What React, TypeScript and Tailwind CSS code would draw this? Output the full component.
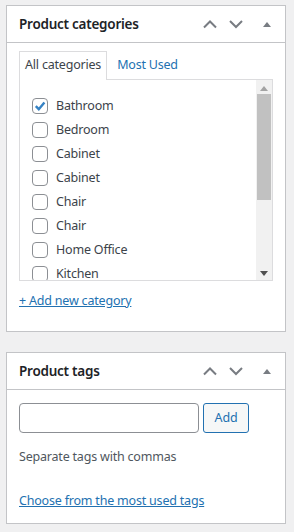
import React from "react";

const font = { fontFamily: '"Noto Sans", "Open Sans", sans-serif' };

function Chevron({ up }: { up?: boolean }) {
  return (
    <svg width="16" height="10" viewBox="0 0 16 10" aria-hidden="true">
      <path
        d={up ? "M2 8.5 L8 2.5 L14 8.5" : "M2 2 L8 8 L14 2"}
        fill="none"
        stroke="#787c82"
        strokeWidth="2"
      />
    </svg>
  );
}

function HeaderButtons() {
  return (
    <div className="flex items-center">
      <span className="flex w-[26px] justify-center">
        <Chevron up />
      </span>
      <span className="flex w-[26px] justify-center">
        <Chevron />
      </span>
      <span className="flex w-[36px] justify-center">
        <svg width="10" height="6" viewBox="0 0 10 6" aria-hidden="true">
          <path d="M1 6 L5 1 L9 6 Z" fill="#787c82" />
        </svg>
      </span>
    </div>
  );
}

function Postbox({ title, children }: { title: string; children: React.ReactNode }) {
  return (
    <div className="border border-[#c3c4c7] bg-white">
      <div className="flex h-[37px] items-center justify-between border-b border-[#c3c4c7] pl-3">
        <h2 className="text-[13.5px] font-semibold tracking-[-0.25px] text-[#1d2327]">{title}</h2>
        <HeaderButtons />
      </div>
      {children}
    </div>
  );
}

function Checkbox({ checked }: { checked?: boolean }) {
  return (
    <span className="flex h-4 w-4 shrink-0 items-center justify-center rounded-[4px] border border-[#8c8f94] bg-white">
      {checked ? (
        <svg width="14" height="14" viewBox="0 0 14 14" aria-hidden="true">
          <path d="M2.8 7.2 L5.8 10.2 L11.4 3.4" fill="none" stroke="#3582c4" strokeWidth="2.4" />
        </svg>
      ) : null}
    </span>
  );
}

const categories = [
  { name: "Bathroom", checked: true },
  { name: "Bedroom" },
  { name: "Cabinet" },
  { name: "Cabinet" },
  { name: "Chair" },
  { name: "Chair" },
  { name: "Home Office" },
  { name: "Kitchen" },
];

export default function App() {
  return (
    <div
      className="min-h-[532px] w-[294px] bg-[#f0f0f1] pl-[6px] pr-[8px] pt-[5px] text-[12.5px] tracking-[-0.2px] text-[#3c434a]"
      style={font}
    >
      <Postbox title="Product categories">
        <div className="px-3 pb-[12px] pt-[8px]">
          <div className="flex items-end">
            <span className="-mb-px flex h-[29px] items-center border border-b-0 border-[#dcdcde] bg-white px-[5px] pb-[1px] text-[#3c434a]">
              All categories
            </span>
            <span className="flex h-[28px] items-center px-[10px] text-[#2271b1]">Most Used</span>
          </div>
          <div className="flex h-[202px] border border-[#dcdcde] bg-white">
            <ul className="flex-1 overflow-hidden pl-3 pt-[14px]">
              {categories.map((c, i) => (
                <li key={i} className="flex h-6 items-center gap-2">
                  <Checkbox checked={c.checked} />
                  <span>{c.name}</span>
                </li>
              ))}
            </ul>
            <div className="flex w-[16px] flex-col items-center bg-[#f1f1f1] pb-[4px] pt-[6px]">
              <svg width="8" height="5" viewBox="0 0 8 5" aria-hidden="true">
                <path d="M0 5 L4 0 L8 5 Z" fill="#a3a3a3" />
              </svg>
              <div className="mt-[3px] h-[106px] w-[14px] bg-[#c1c1c1]" />
              <div className="flex-1" />
              <svg width="8" height="5" viewBox="0 0 8 5" aria-hidden="true">
                <path d="M0 0 L4 5 L8 0 Z" fill="#505050" />
              </svg>
            </div>
          </div>
          <div className="mt-[10px] h-[28px] leading-[20px]">
            <a className="text-[#2271b1] underline">+ Add new category</a>
          </div>
        </div>
      </Postbox>
      <div className="mt-[20px]">
        <Postbox title="Product tags">
          <div className="px-3 pb-[12px] pt-[13px]">
            <div className="flex gap-[4px]">
              <div className="h-[30px] w-[180px] rounded-[4px] border border-[#8c8f94] bg-white" />
              <button className="h-[30px] w-[46px] rounded-[3px] border border-[#2271b1] bg-[#f6f7f7] text-[12.5px] text-[#2271b1]">
                Add
              </button>
            </div>
            <p className="mt-[14px] leading-[20px] text-[#50575e]">Separate tags with commas</p>
            <p className="mt-[24px] leading-[20px]">
              <a className="text-[#2271b1] underline">Choose from the most used tags</a>
            </p>
          </div>
        </Postbox>
      </div>
    </div>
  );
}
